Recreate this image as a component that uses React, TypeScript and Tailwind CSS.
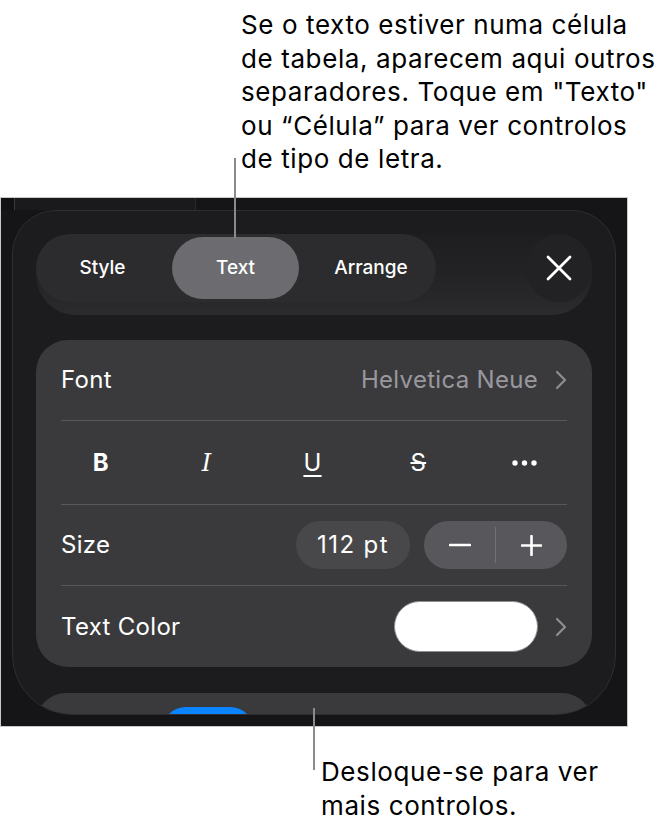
import React from 'react';

const FONT = { fontFamily: 'Inter, "Noto Sans", sans-serif' };

function Chevron() {
  return (
    <svg width="12" height="20" viewBox="0 0 12 20" fill="none">
      <path d="M2 2l8 8-8 8" stroke="#8e8e93" strokeWidth="2.2" strokeLinecap="round" strokeLinejoin="round" />
    </svg>
  );
}

function Row({ children, last }: { children: React.ReactNode; last?: boolean }) {
  return (
    <div className={`mx-[25px] flex h-[81px] items-center ${last ? '' : 'border-b border-[#58585c]'}`}>
      {children}
    </div>
  );
}

export default function App() {
  return (
    <div className="relative h-[822px] w-[668px] overflow-hidden bg-white text-black" style={FONT}>
      {/* top callout */}
      <div className="h-[197px] whitespace-nowrap pl-[241px] pt-[8px] text-[26px] leading-[33.5px] tracking-[0.6px]">
        Se o texto estiver numa célula
        <br />
        de tabela, aparecem aqui outros
        <br />
        separadores. Toque em "Texto"
        <br />
        ou “Célula” para ver controlos
        <br />
        de tipo de letra.
      </div>

      {/* screenshot */}
      <div className="h-[530px] w-[628px] overflow-hidden border border-[#c9c9cb] bg-[#151517]">
        <div className="flex h-[12px]">
          <div className="w-[14px] border-r border-[#38383a] bg-[#111113]" />
          <div className="w-[181px] border-r border-[#2a2a2c] bg-[#1a1a1c]" />
          <div className="flex-1 bg-[#151517]" />
        </div>

        <div className="mx-[11px] h-[505px] overflow-hidden rounded-t-[44px] rounded-b-[60px] border border-[#2e2e30] bg-[#1c1c1e] px-[23px] pt-[23px]">
          {/* toolbar */}
          <div className="h-[81px] rounded-[40px] bg-gradient-to-b from-[#1e1e20] via-[#232325] to-[#2b2b2d]">
            <div className="flex items-start justify-between">
              <div className="flex h-[68px] w-[400px] items-center gap-[6px] rounded-full bg-[#2c2c2e] px-[3px] text-[19px] font-medium text-white">
                <div className="flex h-[62px] w-[127px] items-center justify-center">Style</div>
                <div className="flex h-[62px] w-[127px] items-center justify-center rounded-full bg-[#6c6c70]">Text</div>
                <div className="flex h-[62px] flex-1 items-center justify-center pl-[4px]">Arrange</div>
              </div>
              <div className="flex h-[68px] w-[66px] items-center justify-center rounded-full bg-[#222224]">
                <svg width="26" height="26" viewBox="0 0 26 26" fill="none">
                  <path d="M2 2l22 22M24 2L2 24" stroke="#ffffff" strokeWidth="2.8" strokeLinecap="round" />
                </svg>
              </div>
            </div>
          </div>

          {/* main card */}
          <div className="mt-[25px] rounded-[32px] bg-[#3a3a3c] text-[24px] tracking-[0.3px] text-white">
            <Row>
              <span className="flex-1">Font</span>
              <span className="mr-[17px] text-[#98989e]">Helvetica Neue</span>
              <Chevron />
            </Row>
            <div className="mx-[25px] flex h-[84px] items-center border-b border-[#58585c]">
              <div className="-ml-[13px] -mr-[10px] flex flex-1 items-center">
                <div className="flex flex-1 justify-center text-[24px] font-bold">B</div>
                <div
                  className="flex flex-1 justify-center text-[24px] italic"
                  style={{ fontFamily: '"DejaVu Serif", serif' }}
                >
                  I
                </div>
                <div className="flex flex-1 justify-center text-[24px] underline decoration-[1.5px] underline-offset-[4px]">U</div>
                <div className="flex flex-1 justify-center text-[24px] line-through decoration-[1.5px]">S</div>
                <div className="flex flex-1 justify-center">
                  <svg width="25" height="6" viewBox="0 0 25 6">
                    <circle cx="3" cy="3" r="2.7" fill="#fff" />
                    <circle cx="12.5" cy="3" r="2.7" fill="#fff" />
                    <circle cx="22" cy="3" r="2.7" fill="#fff" />
                  </svg>
                </div>
              </div>
            </div>
            <Row>
              <span className="flex-1">Size</span>
              <div className="flex h-[48px] w-[114px] items-center justify-center rounded-full bg-[#48484a] tracking-[1.4px]">
                112 pt
              </div>
              <div className="ml-[14px] flex h-[48px] w-[143px] items-center rounded-full bg-[#58585c]">
                <div className="flex flex-1 justify-center">
                  <svg width="22" height="4" viewBox="0 0 22 4">
                    <path d="M1 2h20" stroke="#fff" strokeWidth="2.6" strokeLinecap="round" />
                  </svg>
                </div>
                <div className="h-[36px] w-px bg-[#727276]" />
                <div className="flex flex-1 justify-center">
                  <svg width="21" height="21" viewBox="0 0 21 21">
                    <path d="M1 10.5h19M10.5 1v19" stroke="#fff" strokeWidth="2.6" strokeLinecap="round" />
                  </svg>
                </div>
              </div>
            </Row>
            <Row last>
              <span className="flex-1">Text Color</span>
              <div className="mr-[17px] h-[51px] w-[144px] rounded-full border border-[#8e8e93] bg-white" />
              <Chevron />
            </Row>
          </div>

          {/* next card, cut off */}
          <div className="mt-[26px] h-[40px] rounded-t-[30px] bg-[#3a3a3c] pl-[126px] pt-[14px]">
            <div className="h-[30px] w-[92px] rounded-t-[24px] bg-[#0a84ff]" />
          </div>
        </div>
      </div>

      {/* bottom callout */}
      <div className="whitespace-nowrap pl-[321px] pt-[28px] text-[26px] leading-[33.5px] tracking-[0.6px]">
        Desloque-se para ver
        <br />
        mais controlos.
      </div>

      {/* leader lines */}
      <div className="absolute left-[234px] top-[158px] h-[80px] w-[1.5px] bg-[#8a8a8c]" />
      <div className="absolute left-[313px] top-[708px] h-[62px] w-[1.5px] bg-[#8a8a8c]" />
    </div>
  );
}
